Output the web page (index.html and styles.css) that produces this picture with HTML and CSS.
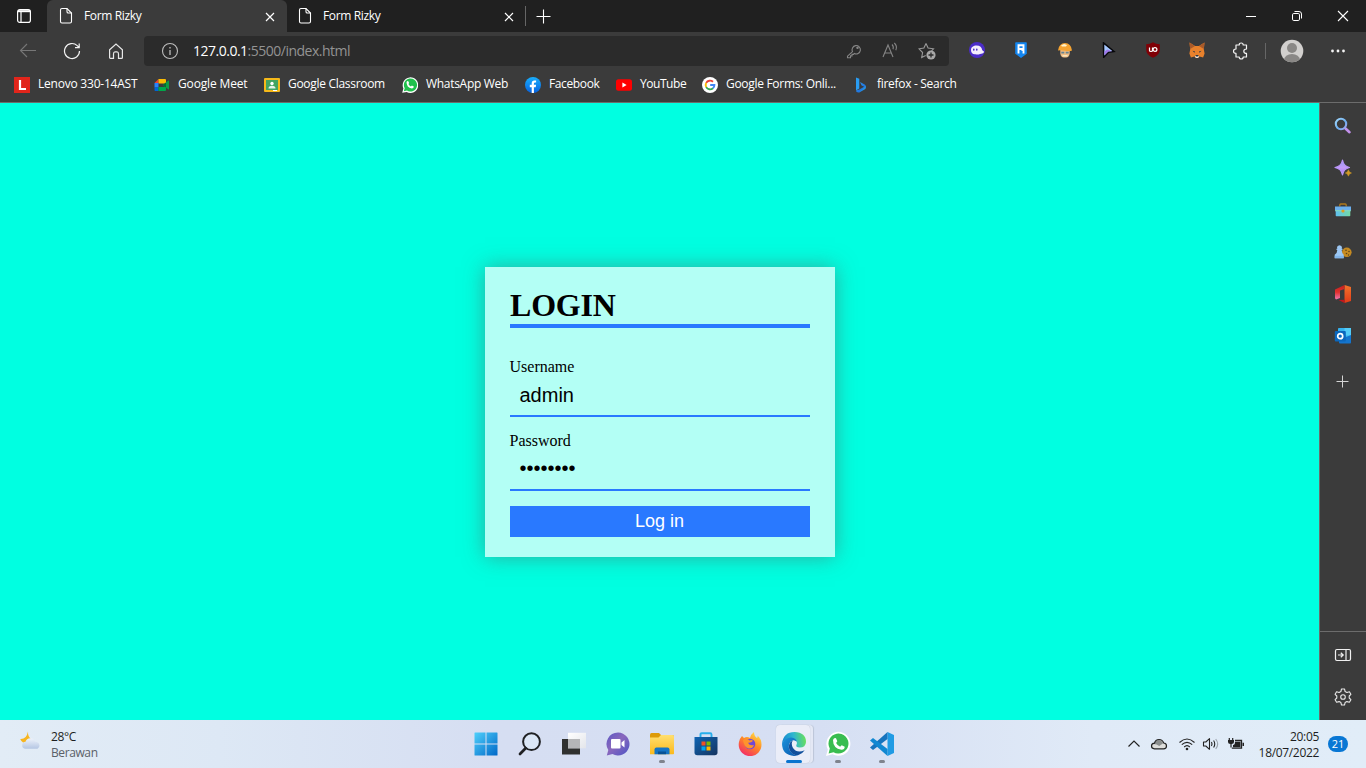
FILE: index.html
```html
<!DOCTYPE html>
<html lang="id">
<head>
<meta charset="utf-8">
<title>Form Rizky</title>
<link rel="stylesheet" href="styles.css">
</head>
<body>
<svg width="0" height="0" class="defs">
  <defs>
    <linearGradient id="gLens" x1="0" y1="0" x2="1" y2="1"><stop offset="0" stop-color="#9fd6fb"/><stop offset=".6" stop-color="#6bacee"/><stop offset="1" stop-color="#a9a3ee"/></linearGradient>
    <linearGradient id="gSpark" x1="0" y1="0" x2="0" y2="1"><stop offset="0" stop-color="#8e9bf5"/><stop offset=".5" stop-color="#c39bfa"/><stop offset="1" stop-color="#a878ee"/></linearGradient>
    <linearGradient id="gBox" x1="0" y1="0" x2="1" y2="0"><stop offset="0" stop-color="#5fc0f0"/><stop offset="1" stop-color="#74dba4"/></linearGradient>
    <linearGradient id="gWin" x1="0" y1="0" x2="1" y2="1"><stop offset="0" stop-color="#4fd0fb"/><stop offset="1" stop-color="#0068c8"/></linearGradient>
    <linearGradient id="gFolder" x1="0" y1="0" x2="0" y2="1"><stop offset="0" stop-color="#ffdf70"/><stop offset="1" stop-color="#fbb91c"/></linearGradient>
    <linearGradient id="gChat" x1="0" y1="0" x2="1" y2="1"><stop offset="0" stop-color="#5b58c4"/><stop offset=".45" stop-color="#8a68bd"/><stop offset="1" stop-color="#4b53c5"/></linearGradient>
    <linearGradient id="gStore" x1="0" y1="0" x2="1" y2="1"><stop offset="0" stop-color="#0f64b4"/><stop offset="1" stop-color="#15345f"/></linearGradient>
    <linearGradient id="gFox" x1=".8" y1="0" x2=".2" y2="1"><stop offset="0" stop-color="#ffe04a"/><stop offset=".45" stop-color="#ff8a25"/><stop offset="1" stop-color="#f3246c"/></linearGradient>
    <linearGradient id="gEdgeTop" x1="0" y1=".5" x2="1" y2=".4"><stop offset="0" stop-color="#1687d0"/><stop offset=".5" stop-color="#2fb6cf"/><stop offset="1" stop-color="#6be15a"/></linearGradient>
    <linearGradient id="gEdgeLow" x1="0" y1="0" x2="1" y2="1"><stop offset="0" stop-color="#1b93dc"/><stop offset="1" stop-color="#0b57ac"/></linearGradient>
    <linearGradient id="gBing" x1="0" y1="0" x2="1" y2="1"><stop offset="0" stop-color="#35a3f5"/><stop offset=".6" stop-color="#1f74e0"/><stop offset="1" stop-color="#35d3e8"/></linearGradient>
    <linearGradient id="gCloud" x1="0" y1="0" x2="0" y2="1"><stop offset="0" stop-color="#eef3fb"/><stop offset="1" stop-color="#b4c6e3"/></linearGradient>
    <linearGradient id="gFb" x1="0" y1="0" x2="0" y2="1"><stop offset="0" stop-color="#19aefc"/><stop offset="1" stop-color="#0662e0"/></linearGradient>
    <linearGradient id="gOffice" x1="0" y1="0" x2="0" y2="1"><stop offset="0" stop-color="#f3742b"/><stop offset="1" stop-color="#e13a18"/></linearGradient>
    <linearGradient id="gOfficeLeft" x1="0" y1="0" x2="0" y2="1"><stop offset="0" stop-color="#c1201c"/><stop offset=".5" stop-color="#e0322f"/><stop offset="1" stop-color="#ef79b5"/></linearGradient>
    <linearGradient id="gTaskLight" x1="0" y1="0" x2="1" y2="1"><stop offset="0" stop-color="#fff"/><stop offset="1" stop-color="#e3e5ea"/></linearGradient>
  </defs>
</svg>

<header class="browser">
  <div class="tabstrip">
    <div class="tab-menu">
      <svg width="16" height="16" viewBox="0 0 16 16" fill="none" stroke="#fff" stroke-width="1.2"><rect x="1.6" y="1.6" width="12.8" height="12.8" rx="2.2"/><path d="M2 3.200h12" stroke-width="2"/><path d="M5 4v10"/></svg>
    </div>
    <div class="tab active">
      <svg class="page-icon" width="14" height="18" viewBox="0 0 14 18" fill="none" stroke="#fff" stroke-width="1.1"><path d="M1.500 3q0-1.500 1.500-1.500h5l4.500 4.500v8.500q0 1.500-1.500 1.500H3q-1.500 0-1.500-1.500z"/><path d="M8 1.500v3.200q0 1.300 1.300 1.300h3.200"/></svg>
      <span class="tab-title">Form Rizky</span>
      <svg class="tab-close" width="10" height="10" viewBox="0 0 10 10" stroke="#fff" stroke-width="1.200"><path d="M1 1l8 8M9 1l-8 8"/></svg>
    </div>
    <div class="tab">
      <svg class="page-icon" width="14" height="18" viewBox="0 0 14 18" fill="none" stroke="#fff" stroke-width="1.1"><path d="M1.500 3q0-1.500 1.500-1.500h5l4.500 4.500v8.500q0 1.500-1.500 1.500H3q-1.500 0-1.500-1.500z"/><path d="M8 1.500v3.200q0 1.300 1.300 1.300h3.200"/></svg>
      <span class="tab-title">Form Rizky</span>
      <svg class="tab-close" width="10" height="10" viewBox="0 0 10 10" stroke="#fff" stroke-width="1.200"><path d="M1 1l8 8M9 1l-8 8"/></svg>
    </div>
    <div class="new-tab">
      <svg width="15" height="15" viewBox="0 0 15 15" stroke="#fff" stroke-width="1.100"><path d="M.5 7.500h14M7.500.5v14"/></svg>
    </div>
    <div class="window-controls">
      <span><svg width="12" height="12" viewBox="0 0 12 12" stroke="#fff"><path d="M1 6.500h10"/></svg></span>
      <span><svg width="12" height="12" viewBox="0 0 12 12" fill="none" stroke="#fff"><rect x="1.500" y="3.500" width="7" height="7" rx="1.300"/><path d="M3.500 1.500h4.500q2.500 0 2.500 2.500v4.500"/></svg></span>
      <span><svg width="12" height="12" viewBox="0 0 12 12" stroke="#fff" stroke-width="1.100"><path d="M1 1l10 10M11 1L1 11"/></svg></span>
    </div>
  </div>

  <div class="toolbar">
    <span class="slot"><svg width="18" height="16" viewBox="0 0 18 16" fill="none" stroke="#777" stroke-width="1.100"><path d="M17 7.500H1.500M8 1L1.500 7.500 8 14"/></svg></span>
    <span class="slot"><svg width="18" height="18" viewBox="0 0 18 18" fill="none" stroke="#f2f2f2" stroke-width="1.200"><path d="M16.500 9A7.500 7.500 0 1 1 14.200 3.600L16.200 5.600M16.200 1.500v4.200h-4.200"/></svg></span>
    <span class="slot"><svg width="16" height="18" viewBox="0 0 16 18" fill="none" stroke="#e8e8e8" stroke-width="1.200"><path d="M1.600 7.700L8 2l6.400 5.700V15.400q0 .9-.9.900h-3v-4.400q0-2-1.500-2H7q-1.500 0-1.500 2v4.400h-3q-.9 0-.9-.9z"/></svg></span>
    <div class="address">
      <svg class="info" width="18" height="18" viewBox="0 0 18 18" fill="none" stroke="#bdbdbd" stroke-width="1.100"><circle cx="9" cy="9" r="7.500"/><path d="M9 8v5M9 5v1.500" stroke-width="1.300"/></svg>
      <span class="url"><b>127.0.0.1</b>:5500/index.html</span>
      <span class="addr-slot"><svg width="16" height="16" viewBox="0 0 16 16" fill="none" stroke="#858585" stroke-width="1.100"><path d="M6.500 8.700L1.500 13.200v1.500h3v-1.800h1.500v-1.500h1.500l.8-.9a4.200 4.200 0 1 0-1.800-1.800z"/><circle cx="11.500" cy="4.700" r=".7" fill="#858585"/></svg></span>
      <span class="addr-slot"><svg width="18" height="18" viewBox="0 0 18 18" fill="none" stroke="#858585" stroke-width="1.100"><path d="M2 15L7 3l5 12M3.600 11h6.800M11 2.500q2 2 1 4.800M13.300 1q3.300 3 1.500 7.300"/></svg></span>
      <span class="addr-slot"><svg width="18" height="18" viewBox="0 0 18 18" fill="none" stroke="#9a9a9a" stroke-width="1.100"><path d="M8 1.500l2.100 4.500 5.400.8-2 2M8 1.500L5.900 6l-4.900.8 3.600 3.700-.9 5 4-2"/><circle cx="13" cy="13" r="4.600" fill="#a8a8a8" stroke="none"/><path d="M13 10.500v5M10.500 13h5" stroke="#2b2b2b" stroke-width="1.300"/></svg></span>
    </div>
    <div class="extensions">
      <span class="slot"><svg width="16" height="16" viewBox="0 0 16 16"><circle cx="8" cy="8" r="8" fill="#4b2cc8"/><path d="M2 8C2 5 4.500 3.500 7.500 3.500c3.600 0 5.300 2 5.700 4.500.2 1 1.800.8 1.800 2-.5 1.800-2.500 1.800-4 1.900-1.500.8-3 .8-4.500.3C3.500 12.500 2 10.500 2 8z" fill="#f4eefd"/><ellipse cx="4.800" cy="7.700" rx=".8" ry="1.100" fill="#4b2cc8"/><ellipse cx="7.800" cy="7.700" rx=".8" ry="1.100" fill="#4b2cc8"/></svg></span>
      <span class="slot"><svg width="16" height="16" viewBox="0 0 16 16"><path d="M2.200 1q0-.8.8-.8h10q.8 0 .8.800v10.700L8 16l-5.800-4.300z" fill="#1386f0"/><path d="M5.500 11.500V3.300h5v3.700H6M8.500 7.500l2 .8v3.200" fill="none" stroke="#fff" stroke-width="1.900"/></svg></span>
      <span class="slot"><svg width="16" height="16" viewBox="0 0 16 16"><path d="M3.300 8h9.400v3.500q-.5 4-3.700 4H7q-3.200 0-3.700-4z" fill="#f0bb82"/><path d="M1 8.500Q2 1 8 1t7 7.500q-2 1-7 .2t-7-.2z" fill="#f5a331"/><path d="M4 3.500l3-1.500 3 1-1 1.500H5z" fill="#fff3cb"/><path d="M4.300 9.800h3v1.700h-3zM8.700 9.800h3v1.700h-3z" fill="#648492"/><path d="M5.500 13h5v1.500h-5z" fill="#fbe6bd"/></svg></span>
      <span class="slot"><svg width="16" height="16" viewBox="0 0 16 16"><path d="M2.500.8L13 9.500l-5.500.8-4.800 5z" fill="#a6c8ff" stroke="#07070a" stroke-width="1.500"/><path d="M3.300 9.500l3-2 5 1.800-4 .3-4 3.800z" fill="#9e78ea"/></svg></span>
      <span class="slot"><svg width="16" height="16" viewBox="0 0 16 16"><path d="M8 .3q3 2 6.800 2V8q0 5-6.800 7.800Q1.200 13 1.200 8V2.300Q5 2.300 8 .3z" fill="#800006"/><path d="M4.500 5.500v3q0 1 1.500 1t1.500-1v-3" fill="none" stroke="#fff" stroke-width="1.200"/><circle cx="10" cy="7.500" r="1.900" fill="none" stroke="#fff" stroke-width="1.200"/></svg></span>
      <span class="slot"><svg width="16" height="16" viewBox="0 0 16 16"><path d="M.5.5L6 4h4l5.500-3.500-.7 7 .8 4-1.500 4-3.500-1L9 16H7l-1.600-1.500-3.500 1-1.500-4 .8-4z" fill="#e8812c"/><path d="M.5.5L6 4 1.200 7zM15.500.5L10 4l4.800 3z" fill="#a85a2a"/><path d="M6 14h4l-.8 2H6.800z" fill="#eee0d4"/><path d="M3.500 8.800l2.500.7-.5 1.200zM12.500 8.800l-2.500.7.5 1.200zM6.500 13h3l-.4 1.500H7z" fill="#22364b"/></svg></span>
      <span class="slot"><svg width="18" height="18" viewBox="0 0 18 18" fill="none" stroke="#f3f3f3" stroke-width="1.200"><path d="M4 3h3.200q0-2 2-2t2 2h3.300v4q-2.700 0-2.700 2.200t2.700 2.200V15h-3.300q0 2-2 2t-2-2H4v-3.600q-2.500 0-2.500-2.200T4 7z" stroke-linejoin="round"/></svg></span>
    </div>
    <span class="divider"></span>
    <svg class="avatar" width="24" height="24" viewBox="0 0 24 24"><clipPath id="av"><circle cx="12" cy="12" r="11.300"/></clipPath><circle cx="12" cy="12" r="11.300" fill="#d2d0ce"/><g clip-path="url(#av)" fill="#8a8886"><circle cx="12" cy="9" r="5"/><ellipse cx="12" cy="21" rx="8" ry="6"/></g></svg>
    <svg class="dots" width="16" height="4" viewBox="0 0 16 4" fill="#f4f4f4"><circle cx="2.500" cy="2" r="1.400"/><circle cx="8" cy="2" r="1.400"/><circle cx="13.500" cy="2" r="1.400"/></svg>
  </div>

  <nav class="bookmarks">
    <a class="bm lenovo"><svg width="16" height="16" viewBox="0 0 16 16"><path d="M0 0h16v16H0z" fill="#e1251b"/><path d="M6 3v9h6" fill="none" stroke="#fff" stroke-width="2.200"/></svg><span>Lenovo 330-14AST</span></a>
    <a class="bm meet"><svg width="16" height="16" viewBox="0 0 16 16"><path d="M.5 6l4-4v4z" fill="#ea4335"/><path d="M4.500 2H11q1 0 1 1v3.500H4.500z" fill="#fbbc04"/><path d="M.5 6h4v4.500h-4z" fill="#2684fc"/><path d="M.5 10.500h4V14h-3q-1 0-1-1z" fill="#0066da"/><path d="M4.500 10H12v3q0 1-1 1H4.500z" fill="#00a84a"/><path d="M9 8l5-4.300q1-.7 1 .3v8q0 1-1 .3z" fill="#0e9a45"/><path d="M9 8l3-2.500v5z" fill="#00702c"/></svg><span>Google Meet</span></a>
    <a class="bm classroom"><svg width="16" height="16" viewBox="0 0 16 16"><rect y="1" width="16" height="14" rx="1" fill="#f6b91a"/><path d="M2 3h12v10H2z" fill="#43a462"/><circle cx="8" cy="6.500" r="1.700" fill="#fff"/><path d="M4.500 11.500q0-2.700 3.500-2.700t3.500 2.700z" fill="#e7f5eb"/><path d="M9 13h4v1H9z" fill="#fff"/></svg><span>Google Classroom</span></a>
    <a class="bm whatsapp"><svg width="16" height="16" viewBox="0 0 16 16"><path d="M.2 15.800l1.200-4.300A7.800 7.800 0 1 1 4.700 15z" fill="#fff"/><path d="M1.800 14.300l.9-3.100A6.600 6.600 0 1 1 5 13.600z" fill="#1fc04c"/><path d="M4.500 5q1-1.500 1.800-.8l.8 1.800-.7 1.100q.8 1.700 2.500 2.400l1-.9 1.900 1q0 1.800-2 1.900Q4.500 10.500 4.500 5z" fill="#fff"/></svg><span>WhatsApp Web</span></a>
    <a class="bm facebook"><svg width="16" height="16" viewBox="0 0 16 16"><circle cx="8" cy="8" r="8" fill="url(#gFb)"/><path d="M6.700 16v-5.800H4.800V7.800h1.900V6.200q0-2.800 2.700-2.800l1.700.1v2h-1q-1.200 0-1.200 1.200v1.100h2.200l-.4 2.400H8.900V16z" fill="#fff"/></svg><span>Facebook</span></a>
    <a class="bm youtube"><svg width="16" height="16" viewBox="0 0 16 16"><rect y="2.300" width="16" height="11.400" rx="2.500" fill="#f00"/><path d="M6.400 5.600L10.600 8l-4.200 2.400z" fill="#fff"/></svg><span>YouTube</span></a>
    <a class="bm forms"><svg width="16" height="16" viewBox="0 0 16 16" fill="none" stroke-width="1.900"><circle cx="8" cy="8" r="8" fill="#fff"/><path d="M4.200 5.900A4.400 4.400 0 0 1 11 4.800" stroke="#ea4335"/><path d="M4.200 10.100a4.400 4.400 0 0 1 0-4.200" stroke="#fbbc05"/><path d="M11 11.200a4.400 4.400 0 0 1-6.800-1.100" stroke="#34a853"/><path d="M8.200 8h4.200q0 2.100-1.500 3.300" stroke="#4285f4"/></svg><span>Google Forms: Onli...</span></a>
    <a class="bm bing"><svg width="16" height="16" viewBox="0 0 16 16"><path d="M3 .5l3.300 1.200v9.800L3 13.500z" fill="#299cf2"/><path d="M7 5l1.600 3.400 2.500 1.300-4.800 2.800L3 13.500q0 2.500 3.300 2l6-3.500q1.700-2.700-.6-4.500z" fill="url(#gBing)"/></svg><span>firefox - Search</span></a>
  </nav>
</header>

<div class="workspace">
  <main class="viewport">
    <form class="login-card">
      <h1>LOGIN</h1>
      <label>Username</label>
      <div class="field">admin</div>
      <label>Password</label>
      <div class="field dotted">••••••••</div>
      <button type="button">Log in</button>
    </form>
  </main>
  <aside class="sidebar">
    <div class="side-apps">
      <span><svg width="18" height="18" viewBox="0 0 18 18" fill="none"><path d="M11.500 11.500l4 3.700" stroke="#c391ec" stroke-width="2.600" stroke-linecap="round"/><circle cx="7" cy="7" r="5.200" stroke="url(#gLens)" stroke-width="2.100"/></svg></span>
      <span><svg width="18" height="18" viewBox="0 0 18 18"><path d="M8.500 1q1 6 7 7.500-6 1.300-7 7.500-1-6.200-7.500-7.500Q7.500 7 8.500 1z" fill="url(#gSpark)" stroke="#b895f7" stroke-width="1.200" stroke-linejoin="round"/><path d="M14.400 10.800q.6 2.600 3.100 3.200-2.500.6-3.100 3.200-.6-2.600-3.100-3.200 2.500-.6 3.100-3.200z" fill="#d19a25" stroke="#d19a25" stroke-width=".5"/></svg></span>
      <span><svg width="18" height="18" viewBox="0 0 18 18"><path d="M5.800 5.500V4q0-1 1-1h4.400q1 0 1 1v1.500" fill="none" stroke="#b17a1b" stroke-width="1.300"/><path d="M1.700 8h14.600v6.500q0 .8-.8.800h-13q-.8 0-.8-.8z" fill="url(#gBox)"/><path d="M1 5.500h16v4H1z" fill="#6cb0ee"/><path d="M1.200 9h15.600v1.300H1.200z" fill="#80d5c3"/><circle cx="9" cy="10" r="1.600" fill="#dba022"/></svg></span>
      <span><svg width="18" height="18" viewBox="0 0 18 18"><circle cx="12.800" cy="9.300" r="4.800" fill="#c68b22"/><g fill="#5d4219"><circle cx="12" cy="7.300" r=".8"/><circle cx="15" cy="8.500" r=".8"/><circle cx="12.500" cy="10.500" r=".8"/><circle cx="14.500" cy="12" r=".7"/></g><path d="M3.300 7H2.500V5.700h.8q-1-3.200 2.200-3.500 3.200.3 2.200 3.500h.8V7h-.8q0 3 2 4.700v3.500H.7v-3.500Q3.300 10 3.300 7z" fill="#9cc7f3"/><path d="M.7 12.800h9v2.400h-9z" fill="#82b5ea"/></svg></span>
      <span><svg width="18" height="20" viewBox="0 0 18 20"><path d="M10.500 1L17 3v14l-6.500 2z" fill="url(#gOffice)"/><path d="M10.500 1v4L6 6.500V14l-4 1.500-1-1.200V5.600z" fill="url(#gOfficeLeft)"/><path d="M4.500 16l6-.2V19z" fill="#c3161c"/></svg></span>
      <span><svg width="18" height="18" viewBox="0 0 18 18"><path d="M4 1.800q0-.8.800-.8h11.500q.7 0 .7.800V13H4z" fill="#35b2ee"/><path d="M10.500 1h6.500v7.500h-6.500z" fill="#52cbf7"/><path d="M5 13l12-5v7.500q0 .9-.9.900H6q-1 0-1-1z" fill="#1475ce"/><rect x=".8" y="4" width="11" height="10.500" rx="1" fill="#0b67bd"/><circle cx="6.200" cy="9.200" r="2.500" fill="none" stroke="#fff" stroke-width="1.700"/></svg></span>
      <span class="add"><svg width="14" height="14" viewBox="0 0 14 14" stroke="#d5d5d5"><path d="M.5 7.500h12M6.500 1.500v12"/></svg></span>
    </div>
    <div class="side-tools">
      <span><svg width="18" height="14" viewBox="0 0 18 14" fill="none" stroke="#f0f0f0" stroke-width="1.200"><rect x="1.500" y="1.500" width="15" height="11" rx="1.400"/><path d="M12 1.500v11M4 7h5M6.800 4.800L9.200 7 6.800 9.200"/></svg></span>
      <span><svg width="18" height="18" viewBox="0 0 18 18" fill="none" stroke="#e7e7e7" stroke-width="1.100" stroke-linejoin="round"><path d="M7.500 1h3l.6 2.500 1.800 1 2.500-.8L16.900 6.300 15.200 8v2l1.700 1.700-1.500 2.600-2.500-.7-1.800 1-.6 2.400h-3l-.6-2.400-1.800-1-2.500.7-1.500-2.600L2.800 10V8L1.100 6.300l1.500-2.600 2.500.8 1.800-1z"/><circle cx="9" cy="9" r="2.300"/></svg></span>
    </div>
  </aside>
</div>

<footer class="taskbar">
  <div class="weather">
    <svg width="24" height="22" viewBox="0 0 24 22"><path d="M9 .5q-.5 5.500 4 8.500L9 12.500Q3 12.500 1.200 8q6.300.5 7.800-7.500z" fill="#f7b520"/><path d="M6 17.800a3.600 3.600 0 0 1 .5-7.100 5 5 0 0 1 9.500-.2q1 0 1.800.6a3.600 3.600 0 0 1 .7 6.700z" fill="url(#gCloud)"/></svg>
    <div class="weather-text"><div>28°C</div><div class="cond">Berawan</div></div>
  </div>
  <div class="apps">
    <span><svg width="24" height="24" viewBox="0 0 24 24" fill="url(#gWin)"><path d="M.5 1q0-.5.500-.5h10.500v11H.5zM12.500.5H23q.5 0 .5.500v10.500h-11zM.5 12.500h11v11H1q-.5 0-.5-.5zM12.500 12.500h11V23q0 .5-.5.500H12.500z"/></svg></span>
    <span><svg width="24" height="24" viewBox="0 0 24 24" fill="none" stroke="#202124"><circle cx="13.500" cy="9.700" r="8.400" stroke-width="2" fill="#dce7f7"/><path d="M7.600 16.200L2 22" stroke-width="2.700" stroke-linecap="round"/></svg></span>
    <span><svg width="24" height="24" viewBox="0 0 24 24"><path d="M0 7h18v15.500H0z" fill="#303130"/><path d="M6 .8h18v15.500H6z" fill="url(#gTaskLight)"/><path d="M6 7h12v9.300H6z" fill="#b5b6b8"/></svg></span>
    <span><svg width="24" height="24" viewBox="0 0 24 24"><path d="M12 .5a11.500 11.500 0 1 1-5.500 21.600L.8 23.400l1.500-5.300A11.500 11.500 0 0 1 12 .5z" fill="url(#gChat)"/><rect x="5" y="7" width="9.500" height="9.500" rx="1" fill="#fff"/><path d="M15.500 10.500l3-2.500v7.500l-3-2.500z" fill="#fff"/></svg></span>
    <span class="running"><svg width="26" height="24" viewBox="0 0 26 24"><path d="M1 3q0-2 1.500-2H10l2 2h11.500q1.500 0 1.500 1.500V9H1z" fill="#dd9a08"/><path d="M1 5.500h8.500L12 3h11.500Q25 3 25 4.500v17q0 .7-.8.700H1z" fill="url(#gFolder)"/><path d="M5.500 22.200V17.500q0-2 2-2h11q2 0 2 2v4.700z" fill="#1474c5"/><path d="M9 19.500h8v2.700H9z" fill="#075195"/></svg></span>
    <span><svg width="24" height="24" viewBox="0 0 24 24"><path d="M6.500 6V2.500q0-1.300 1.300-1.300h8.400q1.300 0 1.300 1.300V6" fill="none" stroke="#28aeeb" stroke-width="1.900"/><path d="M.5 5h23v15.500q0 2.800-2.800 2.800H3.300Q.5 23.300.5 20.500z" fill="url(#gStore)"/><path d="M7.500 9.500h4v4h-4z" fill="#f25022"/><path d="M12.500 9.500h4v4h-4z" fill="#7fba00"/><path d="M7.500 14.500h4v4h-4z" fill="#00a4ef"/><path d="M12.500 14.500h4v4h-4z" fill="#ffb900"/></svg></span>
    <span><svg width="24" height="24" viewBox="0 0 24 24"><path d="M1 10q1-4 3-6l2 2q3-2 6 0 1-4 4-6 0 4 3 6 1-1 .5-2.500 4 3.500 4 9A11.400 11.400 0 0 1 .7 13q0-2 .3-3z" fill="url(#gFox)"/><circle cx="12" cy="12" r="5.300" fill="#7048d5"/><path d="M5 8q4-2 6.500.5Q14 7.500 15 9q-2 2-5 1.700 1.500 3.300 6 2.300-1.500 4-5.500 3.500Q6 15.500 5 8z" fill="#ff942c"/></svg></span>
    <span class="running focused"><svg width="26" height="26" viewBox="0 0 26 26"><path d="M1 12.500Q2.500 1 13.500 1 25 1.500 25 11q-.3 5.500-6.300 5.500-4.500-.3-3.200-2.700 1.500-3.300-2-5.500Q7 5.500 1 12.500z" fill="url(#gEdgeTop)"/><path d="M1 12.500Q4.500 6.500 10 6.500q5.500.5 6 5-.5-2-4-2.200-6 2.700-3.500 9.700 3.500 5.500 8.500 5.200Q15 25 13 25 1.200 24 1 12.500z" fill="url(#gEdgeLow)"/><path d="M12 9.300Q6 12.500 8.500 19q3 5.500 8.500 5.200 4.500-1.500 6.700-5-7.700 3.600-11.700-2.200-2.500-4.500 0-7.700z" fill="#12509c"/></svg></span>
    <span class="running"><svg width="26" height="26" viewBox="0 0 26 26"><path d="M1 25l1.800-6.500A12 12 0 1 1 7.500 23.300z" fill="#fff"/><path d="M3.600 22.400l1.200-4.900a10 10 0 1 1 3.700 3.700z" fill="#39bd50"/><path d="M8 9q1-2.700 3-1.800l1.300 3-1.200 1.800q1.500 2.800 4 3.700l1.600-1.500 3 1.500q0 3-3.200 3.100Q8 17.500 8 9z" fill="#fff"/></svg></span>
    <span class="running"><svg width="26" height="26" viewBox="0 0 26 26"><path d="M18.500 1L25 4v18l-6.500 3z" fill="#209be4"/><path d="M1 16.500L18.500 1v7L4 19z" fill="#1774be"/><path d="M1 9.500L18.500 25v-7L4 7z" fill="#1188d2"/></svg></span>
  </div>
  <div class="tray">
    <svg class="chev" width="14" height="14" viewBox="0 0 14 14" fill="none" stroke="#222" stroke-width="1.200"><path d="M1.500 9.500L7 4l5.500 5.500"/></svg>
    <svg class="cloud" width="18" height="14" viewBox="0 0 18 14"><path d="M4.500 11.800Q1.500 11.600 1.500 9t3-2.800Q5.500 2.500 9 2.500t4.700 3.500q2.800.2 2.800 3t-3 2.800z" fill="#dededb"/><path d="M2.500 7Q5 5.500 5 5 6.500 3 9 3.100t4.200 3.200l-4 2.700q-3-2.500-6.700-2z" fill="#8b8e8d"/><path d="M4.500 11.800Q1.500 11.600 1.500 9t3-2.800Q5.500 2.500 9 2.500t4.700 3.500q2.800.2 2.800 3t-3 2.800z" fill="none" stroke="#222" stroke-width="1.200"/></svg>
    <svg class="wifi" width="18" height="14" viewBox="0 0 18 14" fill="none" stroke="#222" stroke-width="1.100"><path d="M1.500 5.500q7.500-7 15 0M3.800 7.700q5.200-4.800 10.400 0M6.200 10q2.800-2.700 5.600 0"/><circle cx="9" cy="12" r="1.300" fill="#222" stroke="none"/></svg>
    <svg class="volume" width="18" height="14" viewBox="0 0 18 14" fill="none" stroke="#222" stroke-width="1.100"><path d="M1.500 5h2.300L7.500 1.700v10.600L3.800 9H1.500z" stroke-linejoin="round"/><path d="M9.500 5q1 2 0 4M11.600 3.500q2.300 3.500 0 7"/><path d="M13.700 2q4 5 0 10" stroke="#9ba3ac"/></svg>
    <svg class="battery" width="18" height="14" viewBox="0 0 18 14"><path d="M2.300 1v2.500M5.700 1v2.500" stroke="#222" stroke-width="1.200"/><path d="M1 3h6v2Q7 7 4.600 7v3.500H3.400V7Q1 7 1 5z" fill="#222"/><path d="M8 3.500h6.500v7.700H4.800" fill="none" stroke="#222" stroke-width="1.300"/><path d="M8 4.700h5.500v5.600H6V8q2 0 2-3.300zM15.500 5.700H17V9h-1.500z" fill="#222"/></svg>
    <div class="clock"><div>20:05</div><div class="date">18/07/2022</div></div>
    <span class="badge">21</span>
  </div>
</footer>
</body>
</html>
```

FILE: styles.css
```css
* { box-sizing: border-box; }
body {
  margin: 0;
  width: 1366px;
  height: 768px;
  overflow: hidden;
  display: flex;
  flex-direction: column;
  font-family: "Open Sans", "Noto Sans", sans-serif;
  font-size: 12px;
  color: #fff;
}
svg { display: block; flex: none; }
.defs { position: absolute; }

/* browser chrome */
.browser {
  height: 103px;
  flex: none;
  background: #3b3b3b;
  border-bottom: 1px solid #6c6c6c;
}
.tabstrip {
  height: 32px;
  display: flex;
  align-items: stretch;
  background: #202020;
}
.tab-menu { width: 47px; display: flex; align-items: center; justify-content: center; }
.tab {
  width: 239px;
  height: 32px;
  display: flex;
  align-items: center;
  padding: 0 12px;
}
.tab.active { width: 240px; background: #3b3b3b; border-radius: 6px 6px 0 0; }
.tab + .tab { padding-left: 11px; }
.page-icon { margin-right: 11px; }
.tab-title { flex: 1; margin-top: -1px; letter-spacing: -0.35px; }
.tab-close { margin-top: 1px; }
.new-tab { display: flex; align-items: center; height: 20px; margin-top: 6px; border-left: 1px solid #666; padding-left: 10px; margin-left: -1px; }
.window-controls { margin-left: auto; display: flex; }
.window-controls span { width: 46px; display: flex; align-items: center; justify-content: center; }

.toolbar { height: 37px; display: flex; align-items: center; padding-left: 6px; }
.slot { width: 44px; display: flex; justify-content: center; flex: none; }
.address {
  width: 805px;
  height: 30px;
  margin-left: 6px;
  display: flex;
  align-items: center;
  padding: 0 4px 0 17px;
  background: #2b2b2b;
  border-radius: 4px;
}
.url { flex: 1; margin-left: 14px; font-size: 14px; color: #939393; letter-spacing: -0.5px; }
.url b { font-weight: 400; color: #fff; }
.addr-slot { width: 36.5px; display: flex; justify-content: center; }
.extensions { display: flex; margin-left: 6px; }
.divider { width: 1px; height: 16px; margin-left: 2px; background: #666; }
.avatar { margin-left: 14px; }
.dots { margin-left: 26px; }

.bookmarks { height: 31px; display: flex; align-items: center; padding-left: 14px; }
.bm { display: flex; align-items: center; gap: 8px; white-space: nowrap; letter-spacing: -0.3px; }
.bm span { margin-top: -2px; }
.lenovo { width: 140px; letter-spacing: -0.22px; }
.meet { width: 110px; letter-spacing: -0.15px; }
.classroom { width: 138px; }
.whatsapp { width: 123px; }
.facebook { width: 91px; letter-spacing: -0.38px; }
.youtube { width: 86px; letter-spacing: -0.45px; }
.forms { width: 151px; }

/* page area */
.workspace { height: 617px; flex: none; display: flex; }
.viewport {
  flex: 1;
  display: flex;
  align-items: center;
  justify-content: center;
  background: #00ffe1;
}
.login-card {
  width: 350px;
  height: 290px;
  margin-left: 1px;
  padding: 20px 25px;
  background: #b3fff5;
  box-shadow: 0 0 20px rgba(90, 90, 90, 0.5);
  font-family: "Liberation Serif", serif;
  color: #000;
}
.login-card h1 {
  margin: 0 0 30px;
  height: 41px;
  font-size: 32px;
  line-height: 37px;
  letter-spacing: -0.2px;
  border-bottom: 4px solid #2979ff;
}
.login-card label { display: block; height: 18px; margin-left: -0.5px; font-size: 16px; line-height: 18px; }
.field {
  height: 41px;
  margin-bottom: 15px;
  padding: 8px 9.5px;
  font: 20px/23px "Liberation Sans", sans-serif;
  border-bottom: 2px solid #2979ff;
}
.dotted { padding-top: 7px; }
.login-card button {
  display: block;
  width: 100%;
  height: 31px;
  padding: 0 1px 0 0;
  border: 0;
  background: #2979ff;
  color: #fff;
  font: 18px/29px "Liberation Sans", sans-serif;
}

.sidebar {
  width: 47px;
  display: flex;
  flex-direction: column;
  justify-content: space-between;
  background: #3b3b3b;
  border-left: 1px solid #6c6c6c;
}
.side-apps { padding-top: 2px; }
.sidebar span { height: 42px; display: flex; align-items: center; justify-content: center; }
.sidebar .add { height: 47px; }
.side-tools { height: 89px; padding-top: 2px; border-top: 1px solid #6c6c6c; }

/* taskbar */
.taskbar {
  height: 48px;
  flex: none;
  display: flex;
  background: linear-gradient(90deg, #e2ecf6 0, #dde8f5 16%, #d6def2 36%, #d6dff3 60%, #e0eaf7 80%, #e1edf8 100%);
  color: #1d1f22;
}
.weather { width: 464px; display: flex; align-items: center; padding-left: 19px; }
.weather svg { margin-top: -4px; }
.weather-text { margin: 2px 0 0 8px; line-height: 16px; letter-spacing: -0.4px; }
.cond { color: #5a6068; }
.apps { display: flex; }
.apps span { width: 44px; height: 48px; display: flex; align-items: center; justify-content: center; position: relative; }
.running::after {
  content: "";
  position: absolute;
  left: 19px;
  bottom: 5px;
  width: 6px;
  height: 3px;
  border-radius: 2px;
  background: #7f838d;
}
.focused::before {
  content: "";
  position: absolute;
  left: 4px;
  top: 5px;
  width: 34px;
  height: 38px;
  border-radius: 4px;
  background: #eaedf8;
  box-shadow: 0 0 1px #aab2c3, 3px 0 0 #e4e8f5, 4px 0 1px #bcc5d7;
}
.focused svg { position: relative; }
.focused::after { left: 14px; width: 16px; background: #0874cf; }
.tray { margin-left: auto; display: flex; align-items: center; padding-right: 18px; }
.cloud { margin-left: 9px; }
.wifi { margin-left: 10px; }
.volume { margin-left: 6px; }
.battery { margin-left: 7px; }
.clock { width: 74px; margin-top: 1px; text-align: right; line-height: 16px; letter-spacing: -0.33px; white-space: nowrap; }
.badge {
  width: 20px;
  height: 16px;
  margin-left: 9px;
  border-radius: 8px;
  background: #0877d4;
  color: #fff;
  font-size: 11px;
  line-height: 15px;
  text-align: center;
}
```
